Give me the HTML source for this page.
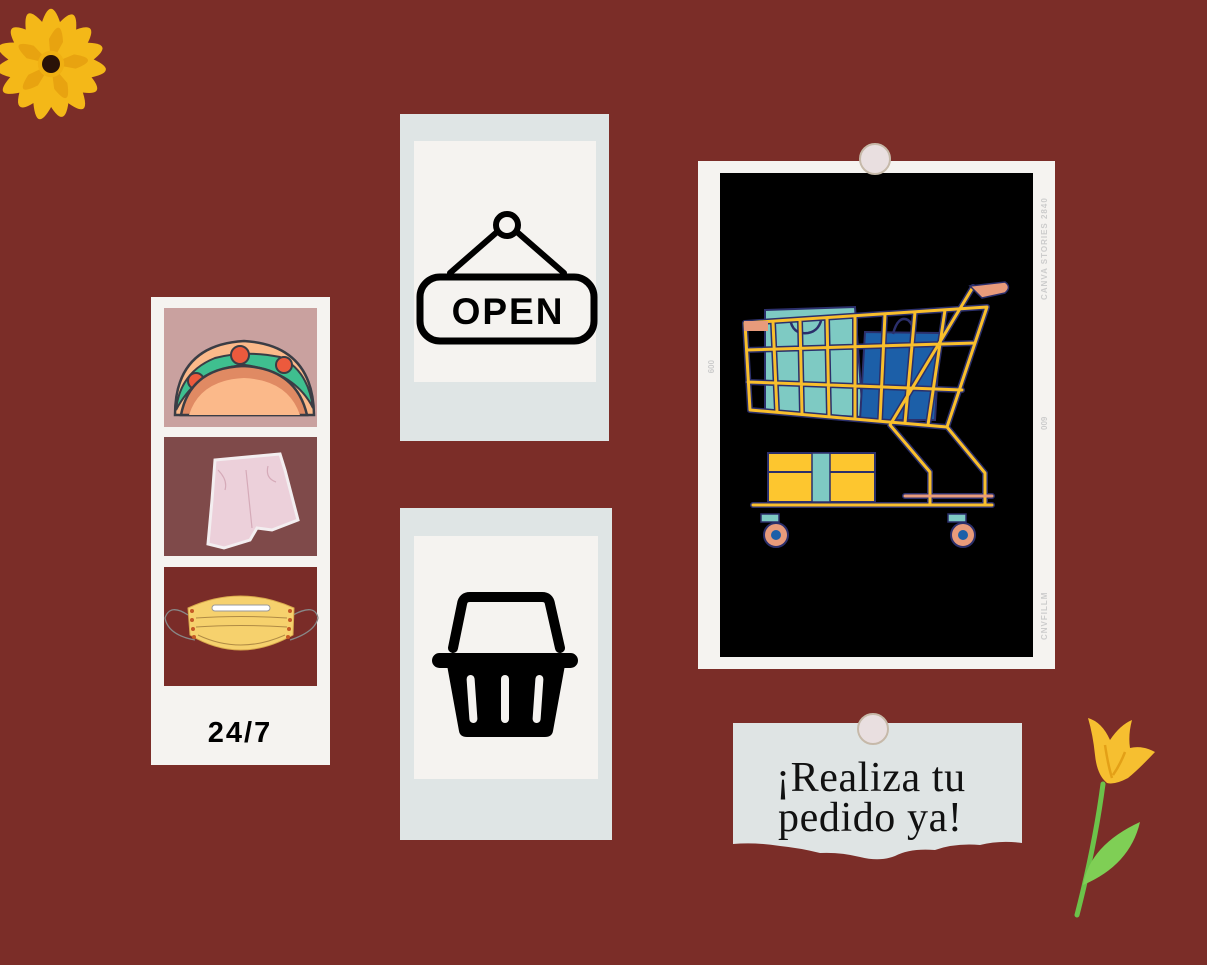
<!DOCTYPE html>
<html><head><meta charset="utf-8"><style>
html,body{margin:0;padding:0;background:#7b2d28;}
svg{display:block}
</style></head><body>
<svg width="1207" height="965" viewBox="0 0 1207 965" xmlns="http://www.w3.org/2000/svg">
<rect width="1207" height="965" fill="#7b2d28"/>

<!-- sunflower -->
<g transform="translate(51,64) scale(1.2)">
  <g fill="#f4b818">
    <path d="M0 0 L-9 -30 Q0 -62 9 -30 Z" transform="rotate(0)"/>
    <path d="M0 0 L-9 -30 Q0 -60 9 -30 Z" transform="rotate(24)"/>
    <path d="M0 0 L-9 -30 Q0 -58 9 -30 Z" transform="rotate(48)"/>
    <path d="M0 0 L-9 -30 Q0 -60 9 -30 Z" transform="rotate(72)"/>
    <path d="M0 0 L-9 -30 Q0 -62 9 -30 Z" transform="rotate(96)"/>
    <path d="M0 0 L-9 -30 Q0 -58 9 -30 Z" transform="rotate(120)"/>
    <path d="M0 0 L-9 -30 Q0 -62 9 -30 Z" transform="rotate(144)"/>
    <path d="M0 0 L-9 -30 Q0 -60 9 -30 Z" transform="rotate(168)"/>
    <path d="M0 0 L-9 -30 Q0 -64 9 -30 Z" transform="rotate(192)"/>
    <path d="M0 0 L-9 -30 Q0 -58 9 -30 Z" transform="rotate(216)"/>
    <path d="M0 0 L-9 -30 Q0 -62 9 -30 Z" transform="rotate(240)"/>
    <path d="M0 0 L-9 -30 Q0 -60 9 -30 Z" transform="rotate(264)"/>
    <path d="M0 0 L-9 -30 Q0 -62 9 -30 Z" transform="rotate(288)"/>
    <path d="M0 0 L-9 -30 Q0 -58 9 -30 Z" transform="rotate(312)"/>
    <path d="M0 0 L-9 -30 Q0 -62 9 -30 Z" transform="rotate(336)"/>
  </g>
  <g fill="#e8a310">
    <path d="M0 0 L-6 -20 Q0 -42 6 -20 Z" transform="rotate(12)"/>
    <path d="M0 0 L-6 -20 Q0 -42 6 -20 Z" transform="rotate(84)"/>
    <path d="M0 0 L-6 -20 Q0 -42 6 -20 Z" transform="rotate(156)"/>
    <path d="M0 0 L-6 -20 Q0 -42 6 -20 Z" transform="rotate(228)"/>
    <path d="M0 0 L-6 -20 Q0 -42 6 -20 Z" transform="rotate(300)"/>
  </g>
  <circle r="11" fill="#f0b012"/>
  <circle r="7.5" fill="#2a1208"/>
</g>

<!-- strip -->
<rect x="151" y="297" width="179" height="468" fill="#f5f3f0"/>
<rect x="164" y="308" width="153" height="119" fill="#c9a19f"/>
<rect x="164" y="437" width="153" height="119" fill="#7f4a4a"/>
<rect x="164" y="567" width="153" height="119" fill="#7a2c28"/>
<!-- taco -->
<path d="M175 415 Q175 345 244 341 Q313 345 314 415 Z" fill="#fbb98a" stroke="#3a3d45" stroke-width="2.5"/>
<path d="M176 410 Q180 372 215 358 Q245 350 280 357 Q308 370 313 408 Q295 372 245 365 Q198 368 176 410Z" fill="#3fbf8f" stroke="#3a3d45" stroke-width="2"/>
<circle cx="240" cy="355" r="9" fill="#ec5a3d" stroke="#3a3d45" stroke-width="2"/>
<circle cx="284" cy="365" r="8" fill="#ec5a3d" stroke="#3a3d45" stroke-width="2"/>
<circle cx="196" cy="381" r="8" fill="#ec5a3d" stroke="#3a3d45" stroke-width="2"/>
<path d="M181 415 Q190 368 243 366 Q296 368 307 415 Z" fill="#e08a63" stroke="#3a3d45" stroke-width="2.5"/>
<path d="M189 415 Q200 380 244 378 Q288 380 300 415 Z" fill="#fbb98a"/>
<!-- shorts -->
<path d="M215 460 L280 454 L285 470 L298 520 L272 530 L257 528 L250 540 L224 548 L208 544 L212 500 Z" fill="#ecd0da" stroke="#f3eef0" stroke-width="3"/>
<path d="M246 470 L252 528 M218 470 Q228 480 225 490 M268 466 Q265 478 276 482" stroke="#d5aab8" stroke-width="1.2" fill="none"/>
<!-- mask -->
<path d="M188 615 Q170 603 165 618 Q168 635 195 640 M293 615 Q315 603 318 618 Q315 632 290 640" fill="none" stroke="#888" stroke-width="1.3"/>
<path d="M188 608 Q240 584 294 608 L293 635 Q240 665 190 635 Z" fill="#f6d16d" stroke="#d8a84c" stroke-width="1"/>
<rect x="212" y="605" width="58" height="6" rx="3" fill="#fff" stroke="#999"/>
<path d="M196 618 Q240 615 287 618 M196 627 Q240 624 287 627 M198 635 Q240 655 285 635" fill="none" stroke="#b08b45" stroke-width="1"/>
<g fill="#c55a26"><circle cx="192" cy="611" r="2"/><circle cx="192" cy="620" r="2"/><circle cx="193" cy="629" r="2"/><circle cx="194" cy="637" r="2"/><circle cx="290" cy="611" r="2"/><circle cx="290" cy="620" r="2"/><circle cx="289" cy="629" r="2"/><circle cx="288" cy="637" r="2"/></g>
<text x="240" y="742" text-anchor="middle" font-family="Liberation Sans, sans-serif" font-weight="bold" font-size="29" letter-spacing="2" fill="#000">24/7</text>

<!-- OPEN polaroid -->
<rect x="400" y="114" width="209" height="327" fill="#dfe5e5"/>
<rect x="414" y="141" width="182" height="241" fill="#f5f3f0"/>
<circle cx="507" cy="225" r="11" fill="none" stroke="#000" stroke-width="6"/>
<path d="M497 232 L450 273 M517 232 L564 273" stroke="#000" stroke-width="6" stroke-linecap="round"/>
<rect x="420" y="277" width="174" height="64" rx="20" fill="none" stroke="#000" stroke-width="7"/>
<text x="508" y="324" text-anchor="middle" font-family="Liberation Sans, sans-serif" font-weight="bold" font-size="37" letter-spacing="2" fill="#000">OPEN</text>

<!-- basket polaroid -->
<rect x="400" y="508" width="212" height="332" fill="#dfe5e5"/>
<rect x="414" y="536" width="184" height="243" fill="#f5f3f0"/>
<path d="M453 648 L462 604 Q463 597 470 597 L542 597 Q549 597 550 604 L560 648" fill="none" stroke="#000" stroke-width="10" stroke-linecap="round" stroke-linejoin="round"/>
<rect x="432" y="653" width="146" height="15" rx="7.5" fill="#000"/>
<path d="M447 665 L565 665 L553 731 Q552 737 545 737 L467 737 Q460 737 459 731 Z" fill="#000"/>
<g fill="#f5f3f0"><rect x="468" y="675" width="8" height="48" rx="4" transform="rotate(-4 472 699)"/><rect x="501" y="675" width="8" height="48" rx="4"/><rect x="534" y="675" width="8" height="48" rx="4" transform="rotate(4 538 699)"/></g>

<!-- cart polaroid -->
<rect x="698" y="161" width="357" height="508" fill="#f5f3f0"/>
<rect x="720" y="173" width="313" height="484" fill="#000"/>
<text transform="translate(1047,300) rotate(-90)" font-family="Liberation Sans, sans-serif" font-size="8" font-weight="bold" fill="#ccc" letter-spacing="1">CANVA STORIES 2840</text>
<text transform="translate(1047,640) rotate(-90)" font-family="Liberation Sans, sans-serif" font-size="8" font-weight="bold" fill="#ccc" letter-spacing="1">CNVFILLM</text>
<text transform="translate(1047,430) rotate(-90)" font-family="Liberation Sans, sans-serif" font-size="8" font-weight="bold" fill="#ccc">009</text>
<text transform="translate(708,360) rotate(90)" font-family="Liberation Sans, sans-serif" font-size="8" font-weight="bold" fill="#ccc">009</text>
<circle cx="875" cy="159" r="15" fill="#e9dfe0" stroke="#c6b9a9" stroke-width="2"/>
<!-- cart -->
<path d="M765 310 L855 307 L863 417 L765 413 Z" fill="#7ecac3" stroke="#2b2f6b" stroke-width="2"/>
<path d="M790 318 Q792 335 808 333 Q820 331 822 316" fill="none" stroke="#2b2f6b" stroke-width="2.5"/>
<path d="M865 332 L940 333 L935 420 L860 420 Z" fill="#1c5fa8" stroke="#2b2f6b" stroke-width="2"/>
<path d="M893 334 Q898 315 908 320 Q914 325 913 334" fill="none" stroke="#2b2f6b" stroke-width="2.5"/>
<g stroke="#2b2f6b" stroke-width="6" fill="none" stroke-linejoin="round" stroke-linecap="round">
<path d="M745 323 L987 307 L947 427 L750 410 Z M747 350 L975 343 M748 382 L962 390 M773 322 L777 412 M800 320 L802 414 M827 318 L829 416 M855 316 L855 418 M885 314 L880 421 M915 312 L905 423 M945 310 L928 425 M973 287 L890 425 L930 472 L930 505 M947 427 L985 473 L985 505 M753 505 L992 505 M905 496 L992 496"/>
</g>
<g stroke="#f9bf2c" stroke-width="3" fill="none" stroke-linejoin="round" stroke-linecap="round">
<path d="M745 323 L987 307 L947 427 L750 410 Z M747 350 L975 343 M748 382 L962 390 M773 322 L777 412 M800 320 L802 414 M827 318 L829 416 M855 316 L855 418 M885 314 L880 421 M915 312 L905 423 M945 310 L928 425 M973 287 L890 425 L930 472 L930 505 M947 427 L985 473 L985 505 M753 505 L992 505"/>
<path d="M905 496 L992 496" stroke="#e89b7b"/>
</g>
<path d="M970 286 L1005 282 Q1012 287 1005 293 L982 298 Z" fill="#e89b7b" stroke="#2b2f6b" stroke-width="1.5"/>
<rect x="744" y="321" width="24" height="10" fill="#e89b7b"/>
<rect x="768" y="453" width="107" height="49" fill="#fdc62f" stroke="#2b2f6b" stroke-width="2"/>
<path d="M768 472 L875 472" stroke="#2b2f6b" stroke-width="2"/>
<rect x="812" y="453" width="18" height="49" fill="#7ecac3" stroke="#2b2f6b" stroke-width="1.5"/>
<g stroke="#2b2f6b" stroke-width="1.5"><rect x="761" y="514" width="18" height="8" fill="#7ecac3"/><rect x="948" y="514" width="18" height="8" fill="#7ecac3"/></g>
<circle cx="776" cy="535" r="12" fill="#e89b7b" stroke="#2b2f6b" stroke-width="2"/><circle cx="776" cy="535" r="5" fill="#1c5fa8"/>
<circle cx="963" cy="535" r="12" fill="#e89b7b" stroke="#2b2f6b" stroke-width="2"/><circle cx="963" cy="535" r="5" fill="#1c5fa8"/>

<!-- note -->
<path d="M733 723 L1022 723 L1022 843 Q1000 840 980 845 Q955 843 935 850 Q910 848 895 856 Q880 862 860 857 Q840 852 820 853 Q800 848 780 846 Q755 842 733 844 Z" fill="#dfe4e4"/>
<circle cx="873" cy="729" r="15" fill="#e9dfe0" stroke="#c6b9a9" stroke-width="2"/>
<text font-family="Liberation Serif, serif" font-size="42" letter-spacing="0.6" fill="#111"><tspan x="776" y="791">¡Realiza tu</tspan><tspan x="778" y="831">pedido ya!</tspan></text>

<!-- tulip -->
<path d="M1103 784 Q1095 845 1077 915" stroke="#6cc24a" stroke-width="5" fill="none" stroke-linecap="round"/>
<path d="M1083 885 Q1090 845 1140 822 Q1130 865 1083 885 Z" fill="#7fcf55"/>
<path d="M1088 718 Q1102 722 1110 740 Q1120 725 1132 720 Q1128 735 1130 748 Q1142 745 1155 752 Q1140 768 1128 778 Q1115 785 1107 783 Q1097 775 1095 755 Q1093 735 1088 718 Z" fill="#f6bf30"/>
<path d="M1105 745 Q1108 765 1112 778 M1125 752 Q1120 765 1113 775" stroke="#e3a017" stroke-width="2.5" fill="none"/>
</svg>
</body></html>
